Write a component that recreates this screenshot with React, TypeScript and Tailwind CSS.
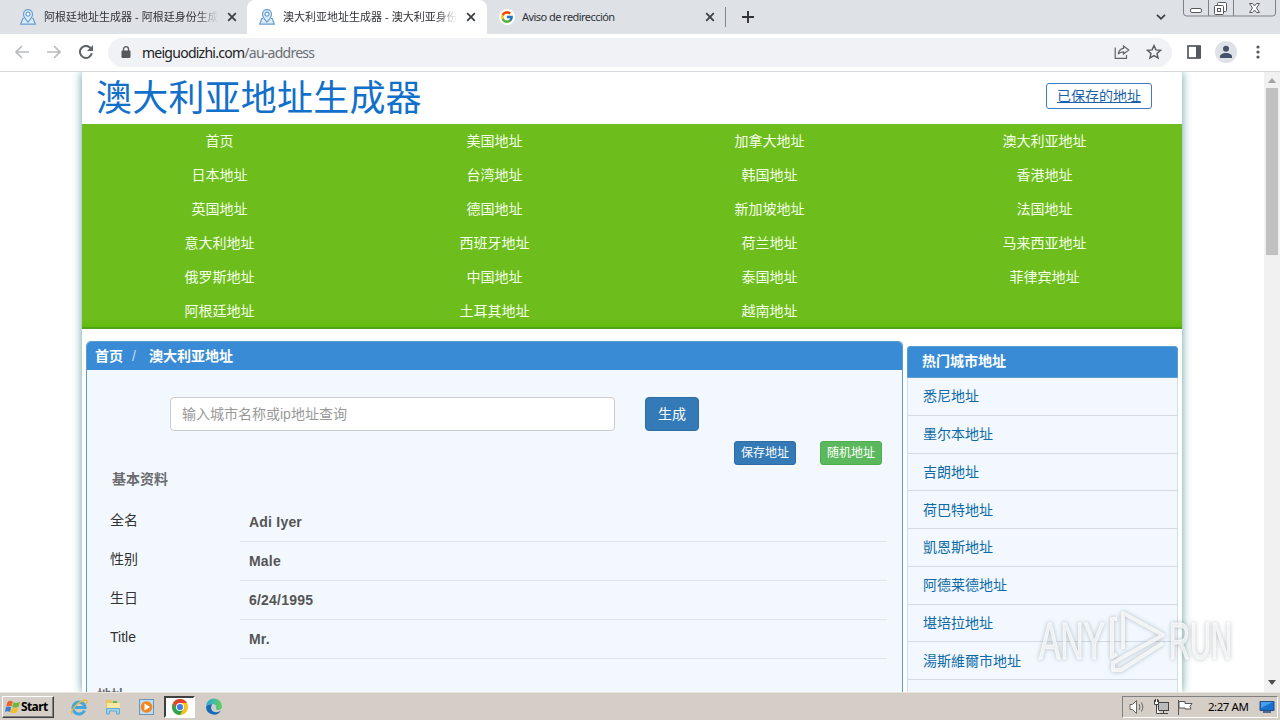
import type { ReactNode } from 'react';
import { FcGoogle } from 'react-icons/fc';

const navLinks = [
  '首页', '美国地址', '加拿大地址', '澳大利亚地址',
  '日本地址', '台湾地址', '韩国地址', '香港地址',
  '英国地址', '德国地址', '新加坡地址', '法国地址',
  '意大利地址', '西班牙地址', '荷兰地址', '马来西亚地址',
  '俄罗斯地址', '中国地址', '泰国地址', '菲律宾地址',
  '阿根廷地址', '土耳其地址', '越南地址',
];

const cities = [
  '悉尼地址', '墨尔本地址', '吉朗地址', '荷巴特地址', '凱恩斯地址',
  '阿德莱德地址', '堪培拉地址', '湯斯維爾市地址', '卡尔古利地址',
];

const profile = [
  { label: '全名', value: 'Adi Iyer' },
  { label: '性别', value: 'Male' },
  { label: '生日', value: '6/24/1995' },
  { label: 'Title', value: 'Mr.' },
];

function PinIcon() {
  return (
    <svg className="h-4 w-4 shrink-0" viewBox="0 0 16 16" fill="none" stroke="#6a9fd0" strokeWidth="1.2">
      <path d="M4.2 9.5H2.8L.7 15.2h14.6l-2.1-5.7h-1.4" fill="#dcebf8" />
      <path d="M8 13.2C5.6 10.4 3.5 7.8 3.5 5.2a4.5 4.5 0 0 1 9 0c0 2.6-2.1 5.2-4.5 8z" fill="#dcebf8" />
      <circle cx="8" cy="5.2" r="2" fill="#fff" />
    </svg>
  );
}

function CloseIcon() {
  return (
    <svg className="h-2.5 w-2.5 shrink-0" viewBox="0 0 10 10" stroke="#3c4043" strokeWidth="1.8">
      <path d="M1.2 1.2l7.6 7.6M8.8 1.2L1.2 8.8" />
    </svg>
  );
}

function TabTitle({ children }: { children: ReactNode }) {
  return (
    <span className="ml-2 h-4 w-[174px] shrink-0 overflow-hidden whitespace-nowrap [mask-image:linear-gradient(to_right,black_88%,transparent)]">
      {children}
    </span>
  );
}

function TabStrip() {
  return (
    <div className="flex h-[34px] shrink-0 bg-[#dee1e6] text-[11px] leading-4 text-[#303236]">
      <div className="flex w-[247px] shrink-0 items-center pl-5">
        <PinIcon />
        <TabTitle>阿根廷地址生成器 - 阿根廷身份生成器</TabTitle>
        <span className="ml-[9px]"><CloseIcon /></span>
      </div>
      <div className="flex w-60 shrink-0 items-center rounded-t-lg bg-white pl-3">
        <PinIcon />
        <TabTitle>澳大利亚地址生成器 - 澳大利亚身份生成</TabTitle>
        <span className="ml-[9px]"><CloseIcon /></span>
      </div>
      <div className="flex w-[239px] shrink-0 items-center pl-3">
        <span className="flex h-4 w-4 shrink-0 items-center justify-center rounded-full bg-white">
          <FcGoogle className="h-3.5 w-3.5" />
        </span>
        <span className="ml-[7px] w-[183px] shrink-0 font-['Noto_Sans'] tracking-[-0.05em]">Aviso de redirección</span>
        <CloseIcon />
        <span className="ml-auto h-5 w-px bg-[#85888d]" />
      </div>
      <svg className="mt-[11px] ml-4 h-3 w-3" viewBox="0 0 12 12" stroke="#303236" strokeWidth="1.9">
        <path d="M6 0v12M0 6h12" />
      </svg>
      <svg className="mt-[13px] ml-[402px] h-2 w-2.5" viewBox="0 0 10 8" fill="none" stroke="#3c4043" strokeWidth="1.8">
        <path d="M1 1.8l4 4 4-4" />
      </svg>
      <svg className="ml-[17px] h-[17px] w-[93px] shrink-0" viewBox="0 0 93 17" fill="none" stroke="#7d8087">
        <path d="M.5 0v13a3 3 0 0 0 3 3h86a3 3 0 0 0 3-3V0M25.5 0v16M50.5 0v16" />
        <g stroke="#55585e">
          <rect x="7.500" y="8.500" width="11" height="4" rx="1.500" fill="#fff" />
          <rect x="34.500" y="2.500" width="9" height="9" rx="1" fill="#fff" />
          <rect x="31.500" y="5.500" width="9" height="9" rx="1" fill="#fff" />
          <rect x="34.500" y="8.500" width="3" height="3" />
          <path d="M66.500 3.500h3l2 2.500 2-2.500h3l-3 4.500 3 4.500h-3l-2-2.500-2 2.500h-3l3-4.500z" fill="#fff" />
        </g>
      </svg>
    </div>
  );
}

function Toolbar() {
  return (
    <div className="flex h-[38px] shrink-0 items-center border-b border-[#d6d9dc] bg-white pb-px">
      <svg className="ml-[15px] h-3.5 w-3.5" viewBox="0 0 14 14" fill="none" stroke="#b8babd" strokeWidth="1.6">
        <path d="M14 7H1.500M7 1L1 7l6 6" />
      </svg>
      <svg className="ml-[18px] h-3.5 w-3.5" viewBox="0 0 14 14" fill="none" stroke="#b8babd" strokeWidth="1.6">
        <path d="M0 7h12.500M7 1l6 6-6 6" />
      </svg>
      <svg className="ml-[18px] h-3.5 w-3.5" viewBox="0 0 14 14" fill="none" stroke="#5f6368" strokeWidth="2">
        <path d="M12.800 8.200A6 6 0 1 1 11.500 3" />
        <path d="M14 0v6H8z" fill="#5f6368" stroke="none" />
      </svg>
      <div className="ml-[15px] flex h-[29px] w-[1064px] items-center rounded-full bg-[#f0f2f5] pl-[13px] text-sm">
        <svg className="h-3 w-2.5" viewBox="0 0 10 12" fill="#55585d">
          <rect x=".5" y="4.500" width="9" height="7.500" rx="1" />
          <path d="M2.500 5V3.200a2.500 2.500 0 0 1 5 0V5" fill="none" stroke="#55585d" strokeWidth="1.300" />
        </svg>
        <span className="ml-[11px] pt-px font-['Noto_Sans'] tracking-[-0.053em] text-[#202124]">
          meiguodizhi.com<span className="text-[#6b6f74]">/au-address</span>
        </span>
        <svg className="ml-auto h-3.5 w-4" viewBox="0 0 16 14" fill="none" stroke="#5f6368" strokeWidth="1.200">
          <path d="M1.200 2.500v10.800h11.300V10" />
          <path d="M9.500 1l5.300 4-5.300 4V6.800c-2.600 0-4.200.8-5.300 2.400.4-3 2-5.300 5.300-5.900z" />
        </svg>
        <svg className="mr-2.5 ml-4 h-4 w-4" viewBox="0 0 16 16" fill="none" stroke="#55585d" strokeWidth="1.400">
          <path d="M8 1.600l1.900 4.300 4.700.4-3.600 3.100 1.100 4.600L8 11.600 3.900 14 5 9.400 1.400 6.300l4.700-.4z" />
        </svg>
      </div>
      <svg className="ml-[15px] h-3.5 w-3.5" viewBox="0 0 14 14">
        <rect x="1" y="1" width="12" height="12" fill="#fff" stroke="#55585d" strokeWidth="1.700" />
        <rect x="9" y="1" width="5" height="12" fill="#55585d" />
      </svg>
      <svg className="ml-3.5 h-[22px] w-[22px]" viewBox="0 0 22 22">
        <circle cx="11" cy="11" r="11" fill="#dee1e6" />
        <circle cx="11" cy="7.800" r="3" fill="#455069" />
        <path d="M5 17v-1.500c0-2.300 3-3.500 6-3.500s6 1.200 6 3.500V17z" fill="#455069" />
      </svg>
      <svg className="ml-[19px] h-3.5 w-1" viewBox="0 0 4 14" fill="#55585d">
        <circle cx="2" cy="2" r="1.600" />
        <circle cx="2" cy="7" r="1.600" />
        <circle cx="2" cy="12" r="1.600" />
      </svg>
    </div>
  );
}

function AddressPanel() {
  return (
    <section className="w-[817px] rounded-t-[5px] border border-b-0 border-[#5b9fd0] bg-[#f2f8fe]">
      <div className="flex h-7 items-center rounded-t bg-[#398bd5] pl-2 font-bold text-white">
        <span>首页</span>
        <span className="ml-[9px] font-normal text-[#cde]">/</span>
        <span className="ml-[13px]">澳大利亚地址</span>
      </div>
      <div className="mt-[27px] ml-[83px] flex gap-[30px]">
        <div className="flex h-[34px] w-[445px] items-center rounded border border-[#ccc] bg-white px-[11px] text-[#999]">
          输入城市名称或ip地址查询
        </div>
        <button className="h-[34px] w-[54px] rounded border border-[#2e6da4] bg-[#337ab7] text-white">生成</button>
      </div>
      <div className="mt-2.5 mr-5 flex justify-end gap-6 text-xs text-white">
        <button className="h-6 w-[62px] rounded-[3px] border border-[#2e6da4] bg-[#337ab7]">保存地址</button>
        <button className="h-6 w-[62px] rounded-[3px] border border-[#4cae4c] bg-[#5cb85c]">随机地址</button>
      </div>
      <h2 className="mt-1 ml-[25px] leading-5 font-bold text-[#6a6c70]">基本资料</h2>
      <div className="mt-[14px]">
        {profile.map((row) => (
          <div key={row.label} className="flex h-[39px] pr-[15px] pl-[23px]">
            <div className="w-[130px] pt-[7px] leading-5 text-[#333]">{row.label}</div>
            <div className="flex-1 border-b border-[#dfe6ed] pt-[9px] pl-[9px] leading-5 font-bold tracking-[0.015em] text-[#555]">
              {row.value}
            </div>
          </div>
        ))}
      </div>
      <h2 className="mt-[26px] ml-2.5 leading-5 font-bold text-[#6a6c70]">地址</h2>
    </section>
  );
}

function CityList() {
  return (
    <aside className="mt-[5px] w-[271px]">
      <div className="flex h-8 items-center rounded-t-[3px] border border-[#5b9fd0] bg-[#398bd5] pb-0.5 pl-[14px] font-bold text-white">
        热门城市地址
      </div>
      <div className="border-x border-[#d3dbe3] bg-[#f2f8fe]">
        {cities.map((city) => (
          <div key={city} className="flex h-[37.75px] items-center border-b border-[#d3dbe3] pl-[15px] text-[#0d6aa8] last:h-[41px]">
            {city}
          </div>
        ))}
      </div>
    </aside>
  );
}

function Page() {
  return (
    <div className="flex w-[1264px] justify-center">
      <div className="w-[1100px] bg-white shadow-[0_0_9px_#5f9ea0]">
        <header className="flex h-[52px] justify-between pr-[30px] pl-[14px]">
          <h1 className="text-4xl leading-[53px] tracking-[0.2px] text-[#1270cb]">澳大利亚地址生成器</h1>
          <a className="mt-[11px] flex h-[26px] w-[106px] items-center justify-center rounded-[3px] border border-[#3d7cc1] text-[#1a5fae] underline">
            已保存的地址
          </a>
        </header>
        <nav className="grid h-[205px] grid-cols-4 content-start border-b-2 border-[#52a516] bg-[linear-gradient(#6dbd1d_96%,#62bd0c)] text-center leading-[34px] text-[#f5ffe8]">
          {navLinks.map((link) => (
            <a key={link}>{link}</a>
          ))}
        </nav>
        <main className="mt-3 ml-1 flex gap-1">
          <AddressPanel />
          <CityList />
        </main>
      </div>
    </div>
  );
}

function Scrollbar() {
  return (
    <div className="flex w-4 shrink-0 flex-col items-center bg-[#f1f1f1]">
      <svg className="mt-1.5 h-[5px] w-2" viewBox="0 0 8 5"><path d="M4 0l4 5H0z" fill="#a3a3a3" /></svg>
      <div className="mt-[5px] h-[167px] w-3 bg-[#c1c1c1]" />
      <svg className="mt-auto mb-[7px] h-[5px] w-2" viewBox="0 0 8 5"><path d="M0 0h8L4 5z" fill="#505050" /></svg>
    </div>
  );
}

function Watermark() {
  return (
    <svg
      className="absolute top-[606px] left-[1032px] h-[70px] w-[208px] drop-shadow-[0_0_2px_rgba(90,100,110,0.55)]"
      viewBox="0 0 208 70"
      fill="#fff"
      fillOpacity=".7"
    >
      <g stroke="#fff" strokeOpacity=".7">
        <text x="7" y="53" fontSize="51" textLength="66" lengthAdjust="spacingAndGlyphs">ANY</text>
        <text x="137" y="53" fontSize="51" textLength="63" lengthAdjust="spacingAndGlyphs">RUN</text>
      </g>
      <g fill="none" stroke="#fff" strokeOpacity=".75" strokeWidth="4" strokeLinejoin="round">
        <path d="M91 43V7l40 22-40 22" />
        <path d="M85 13h-5v38l5-3M91 51l-10 6v7h8l42-27" />
      </g>
    </svg>
  );
}

function Taskbar() {
  return (
    <div className="flex h-7 shrink-0 items-center border-t border-[#e9e6e0] bg-[#d5cec6] pt-px text-black">
      <button className="ml-0.5 flex h-[22px] w-[52px] items-center border border-t-white border-r-[#404040] border-b-[#404040] border-l-white pl-0.5 shadow-[inset_-1px_-1px_#808080]">
        <svg className="h-4 w-4 shrink-0" viewBox="0 0 16 16">
          <path d="M2.500 3C4 1.500 6 1.500 7.800 2.800L6.500 7.500C4.800 6.300 3 6.500 1.200 7.500z" fill="#e8622c" />
          <path d="M8.600 3.200c1.800 1 4 1 6.400-.4l-1.500 5c-2.200 1.100-4.300 1.200-6.200.1z" fill="#72b63c" />
          <path d="M1 8.300c1.700-1 3.500-1 5.200.1L5 13c-1.700-1-3.400-1-5 0z" fill="#3b7fcc" />
          <path d="M7 8.800c2 1 4 1 6.200 0l-1.300 4.500c-2.200 1.300-4.200 1.200-6.200.1z" fill="#f5bd2a" />
        </svg>
        <span className="font-['Noto_Sans'] text-[12px] leading-4 font-bold tracking-[-0.05em]">Start</span>
      </button>
      <svg className="ml-4 h-[18px] w-[18px]" viewBox="0 0 18 18" fill="none">
        <path d="M14.500 12.500A6 6 0 1 1 15 9.500H5" stroke="#42a6df" strokeWidth="3" />
        <path d="M2 16C0 12 9 3 15 2c3-.3 2 2.500 1 4" stroke="#e9bd38" strokeWidth="1.400" />
      </svg>
      <svg className="ml-4 h-[18px] w-[18px]" viewBox="0 0 18 18">
        <path d="M2 2h6l1 2h6v9H2z" fill="#e5c665" />
        <path d="M3 5h13v8H3z" fill="#f7e7a5" />
        <path d="M9 3h4v2H9z" fill="#65b857" />
        <path d="M2.500 16v-5.500h13V16h-3v-3h-7v3z" fill="#9dd2ed" stroke="#65a8ce" />
      </svg>
      <svg className="ml-[15px] h-[18px] w-[18px]" viewBox="0 0 18 18">
        <rect x="2.500" y="1.500" width="14" height="15" fill="#bedbf0" stroke="#6996bd" />
        <circle cx="9.500" cy="9" r="5.800" fill="#f08620" />
        <path d="M7.500 5.500v7L13 9z" fill="#fff" />
      </svg>
      <div className="ml-[9px] flex h-[22px] w-[31px] items-center justify-center border-2 border-t-[#404040] border-r-white border-b-white border-l-[#404040] bg-white">
        <svg className="h-4 w-4" viewBox="0 0 16 16">
          <circle cx="8" cy="8" r="8" fill="#fbc116" />
          <path d="M8 8L4.500 10 1.070 4A8 8 0 0 1 14.930 4H8z" fill="#df4433" />
          <path d="M1.070 4A8 8 0 0 0 8 16l3.500-6L8 8 4.500 10z" fill="#2fa350" />
          <circle cx="8" cy="8" r="4" fill="#fff" />
          <circle cx="8" cy="8" r="3.100" fill="#3f7de9" />
        </svg>
      </div>
      <svg className="ml-2.5 h-[18px] w-[18px]" viewBox="0 0 18 18">
        <defs>
          <linearGradient id="edge" x1="0" x2="1">
            <stop stopColor="#27a9e1" />
            <stop offset="1" stopColor="#64cf59" />
          </linearGradient>
        </defs>
        <path d="M1 8.500a8 8 0 0 1 16 0c0 2-1.400 3.400-3.600 3.400-2 0-3-.7-2.500-1.600C12 8 10 6 7 6 4 6 2 7 1 8.500z" fill="url(#edge)" />
        <path d="M1 9c1-2.200 4-3.200 6.500-2.500C5 8.500 6 13 9.500 14c2.500.7 4.500 0 6.300-1.200A8 8 0 0 1 1 9z" fill="#176ab8" />
      </svg>
      <div className="mr-[2px] ml-auto flex h-[22px] w-[156px] items-center border border-t-[#808080] border-r-white border-b-white border-l-[#808080]">
        <svg className="ml-1.5 h-4 w-[17px] shrink-0" viewBox="0 0 17 16" fill="none" stroke="#666">
          <path d="M1 5.500h2.500l4-4v13l-4-4H1z" fill="#fff" />
          <path d="M10 5q2 3 0 6M12.500 3.500q3 4.500 0 9" />
        </svg>
        <svg className="ml-[7px] h-4 w-4 shrink-0" viewBox="0 0 16 16" fill="none" stroke="#444">
          <rect x="5.500" y="3.500" width="10" height="8" fill="#bbb" />
          <path d="M10.500 12v2M6 14.500h9" />
          <path d="M1.500 1v4.500h4V1M3.500 6v8.500h3M2.500 0v3M4.500 0v3" fill="#fff" />
        </svg>
        <svg className="ml-2 h-4 w-4 shrink-0" viewBox="0 0 16 16" fill="#fff" stroke="#555">
          <path d="M1.500 1v15" />
          <path d="M2 2.500h6v2h7l-2 3 1 2.500H8V9H2z" />
        </svg>
        <span className="ml-[15px] w-[44px] shrink-0 font-['Noto_Sans'] text-[11.5px] leading-4 tracking-[-0.04em] whitespace-nowrap">2:27 AM</span>
        <svg className="ml-[7px] h-3.5 w-4 shrink-0" viewBox="0 0 16 14">
          <path d="M1 1.500h14v9H1z" fill="#1870cf" stroke="#244f87" />
          <path d="M2 2h12L2 8z" fill="#4b9ee8" />
          <path d="M4 11h8v2H4z" fill="#4c6a92" />
        </svg>
      </div>
    </div>
  );
}

export default function App() {
  return (
    <div className="relative flex h-[720px] w-[1280px] flex-col overflow-hidden bg-white font-['Liberation_Sans','Noto_Sans_CJK_SC',sans-serif] text-sm">
      <TabStrip />
      <Toolbar />
      <div className="flex h-[620px] shrink-0 overflow-hidden">
        <Page />
        <Scrollbar />
      </div>
      <Taskbar />
      <Watermark />
    </div>
  );
}
